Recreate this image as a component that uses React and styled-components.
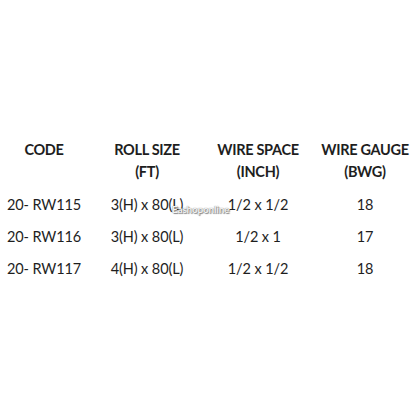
import styled, { createGlobalStyle } from "styled-components"

const GlobalStyle = createGlobalStyle`
  body {
    margin: 0;
    background: #fff;
    font-family: Lato, "Liberation Sans", sans-serif;
  }
`

const rows = [
  ["20- RW115", "3(H) x 80(L)", "1/2 x 1/2", "18"],
  ["20- RW116", "3(H) x 80(L)", "1/2 x 1", "17"],
  ["20- RW117", "4(H) x 80(L)", "1/2 x 1/2", "18"],
]

const heads = [["CODE"], ["ROLL SIZE", "(FT)"], ["WIRE SPACE", "(INCH)"], ["WIRE GAUGE", "(BWG)"]]

export default function App() {
  return (
    <Page>
      <GlobalStyle />
      <Table>
        {heads.map((h) => (
          <Head key={h[0]}>
            {h.map((line) => (
              <div key={line}>{line}</div>
            ))}
          </Head>
        ))}
        {rows.map((r) =>
          r.map((c, i) => <Cell key={r[0] + i}>{c}</Cell>)
        )}
      </Table>
      <Watermark>Eashoponline</Watermark>
    </Page>
  )
}

const Page = styled.div`
  position: relative;
  width: 420px;
  height: 420px;
  padding-top: 139px;
  box-sizing: border-box;
`

const Table = styled.div`
  display: grid;
  grid-template-columns: 88px 118px 104px 110px;
  color: #1e1e1e;
`

const Head = styled.div`
  text-align: center;
  font-weight: 700;
  font-size: 14.5px;
  line-height: 22px;
  padding-bottom: 6px;
  letter-spacing: -0.3px;
`

const Cell = styled.div`
  text-align: center;
  font-size: 14.5px;
  line-height: 32px;
  letter-spacing: -0.1px;
`

const Watermark = styled.div`
  position: absolute;
  left: 172px;
  top: 203px;
  font-size: 10px;
  font-weight: 700;
  color: #f4f4f4;
  text-shadow: 0 0 1px #666, 1px 1px 1px #888;
  letter-spacing: -0.2px;
`
